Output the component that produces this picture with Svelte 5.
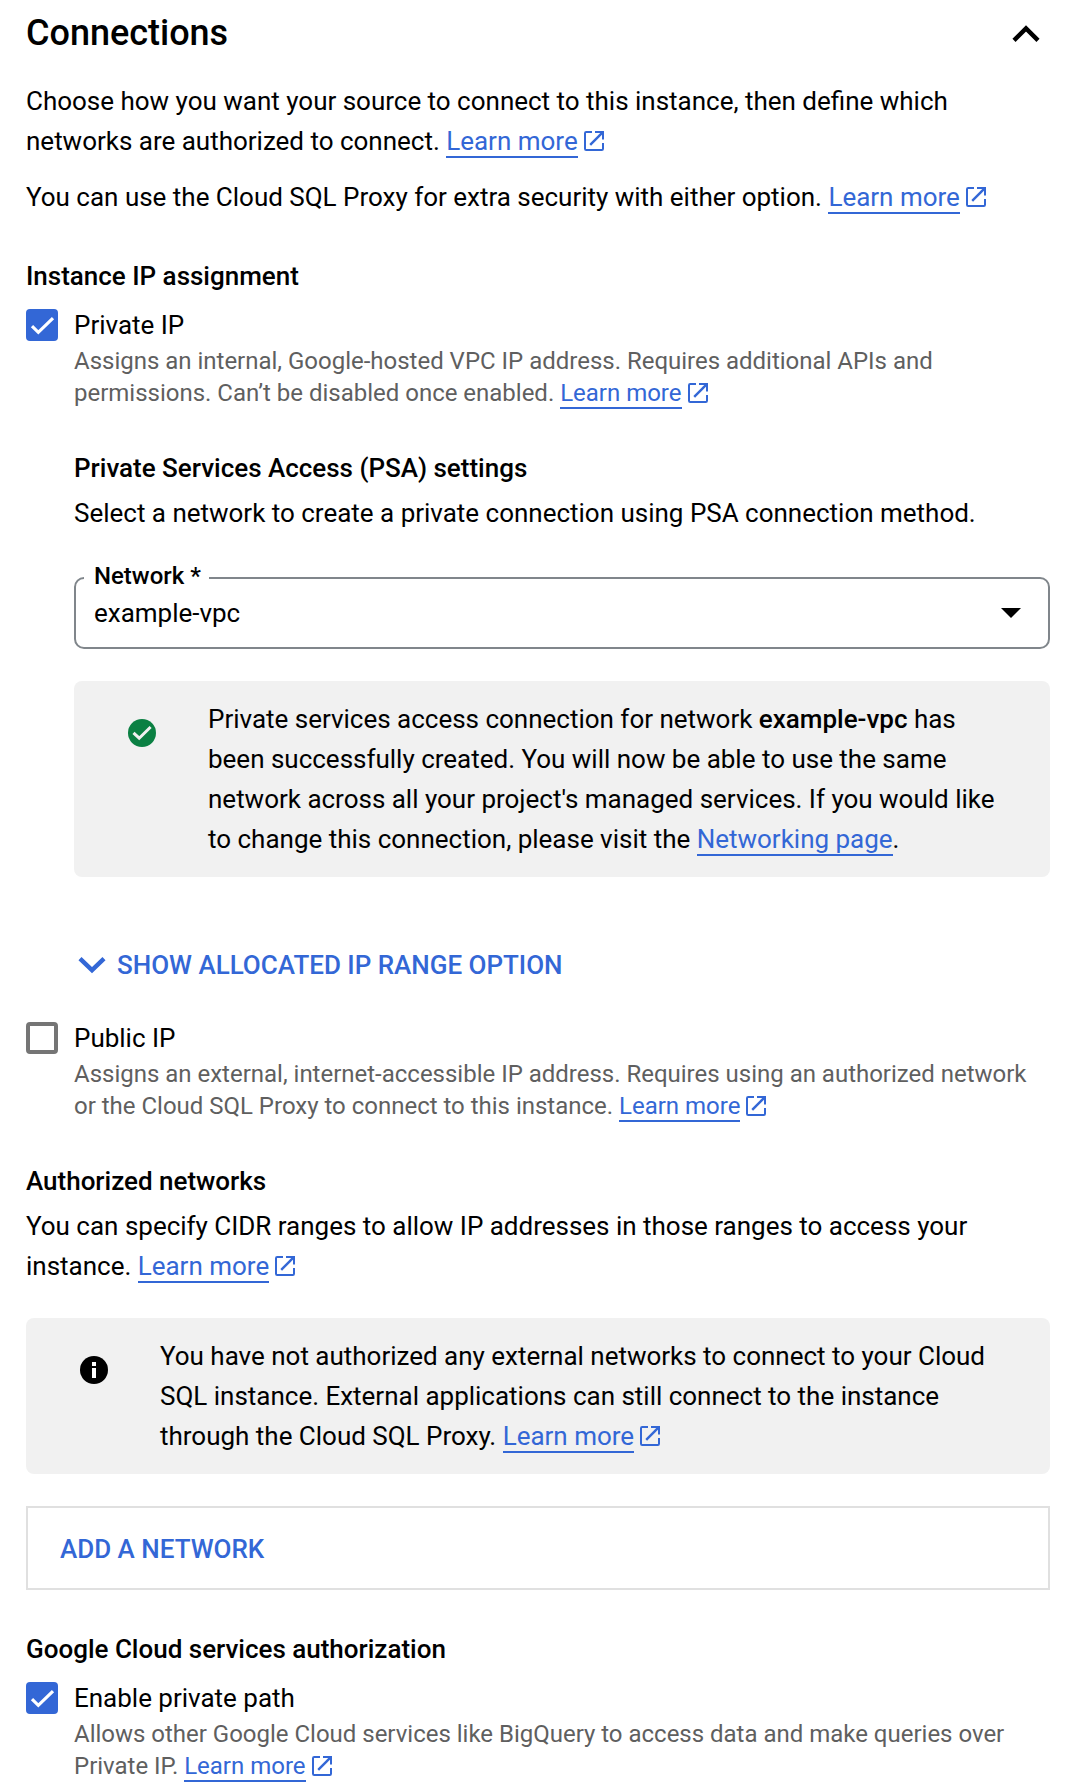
<script>
  let privateIp = $state(true);
  let publicIp = $state(false);
  let privatePath = $state(true);
</script>

{#snippet learnMore()}
  <span class="nowrap"><a href="#learn">Learn more</a><svg class="ext" viewBox="0 0 20 20" aria-hidden="true"><path d="M8 1H2.2Q1 1 1 2.2V17.8Q1 19 2.2 19H17.8Q19 19 19 17.8V12M11 1H19V8.5" /><path class="shaft" d="M18.6 1.4L6.2 13.8" /></svg></span>
{/snippet}

{#snippet checkbox(on)}
  <span class="box" class:on>
    {#if on}
      <svg viewBox="0 0 32 32" aria-hidden="true"><path d="M6 17.2L12.3 23.3L27 9.2" /></svg>
    {/if}
  </span>
{/snippet}

<main>
  <header>
    <h1>Connections</h1>
    <svg class="chev up" viewBox="0 0 28 18" aria-hidden="true"><path d="M2 15.4L14 3.4L26 15.4" /></svg>
  </header>

  <p>Choose how you want your source to connect to this instance, then define which<br />networks are authorized to connect. {@render learnMore()}</p>
  <p class="second">You can use the Cloud SQL Proxy for extra security with either option. {@render learnMore()}</p>

  <h2 class="assign">Instance IP assignment</h2>
  <button class="option" onclick={() => (privateIp = !privateIp)}>{@render checkbox(privateIp)}Private IP</button>
  <p class="hint">Assigns an internal, Google-hosted VPC IP address. Requires additional APIs and<br />permissions. Can’t be disabled once enabled. {@render learnMore()}</p>

  <section class="psa">
    <h2>Private Services Access (PSA) settings</h2>
    <p class="after">Select a network to create a private connection using PSA connection method.</p>
    <div class="field">
      <span class="label">Network *</span>
      <span>example-vpc</span>
      <svg class="caret" viewBox="0 0 20 10" aria-hidden="true"><path d="M0 0H20L10 10Z" /></svg>
    </div>
    <div class="notice">
      <svg class="status" viewBox="0 0 28 28" aria-hidden="true"><circle cx="14" cy="14" r="14" fill="#0b8043" /><path class="tick" d="M5.5 13.8L11.2 19.2L22.6 8" /></svg>
      <p>Private services access connection for network <b>example-vpc</b> has<br />been successfully created. You will now be able to use the same<br />network across all your project's managed services. If you would like<br />to change this connection, please visit the <a href="#networking">Networking page</a>.</p>
    </div>
    <button class="toggle">
      <svg class="chev" viewBox="0 0 28 18" aria-hidden="true"><path d="M2 2.6L14 14.2L26 2.6" /></svg>
      SHOW ALLOCATED IP RANGE OPTION
    </button>
  </section>

  <button class="option" onclick={() => (publicIp = !publicIp)}>{@render checkbox(publicIp)}Public IP</button>
  <p class="hint">Assigns an external, internet-accessible IP address. Requires using an authorized network<br />or the Cloud SQL Proxy to connect to this instance. {@render learnMore()}</p>

  <h2 class="authorized">Authorized networks</h2>
  <p class="after">You can specify CIDR ranges to allow IP addresses in those ranges to access your<br />instance. {@render learnMore()}</p>
  <div class="notice">
    <svg class="status" viewBox="0 0 28 28" aria-hidden="true"><circle cx="14" cy="14" r="14" /><path d="M12 6h4v4h-4zM12 12h4v10h-4z" fill="#fff" /></svg>
    <p>You have not authorized any external networks to connect to your Cloud<br />SQL instance. External applications can still connect to the instance<br />through the Cloud SQL Proxy. {@render learnMore()}</p>
  </div>
  <button class="add">ADD A NETWORK</button>

  <h2 class="services">Google Cloud services authorization</h2>
  <button class="option" onclick={() => (privatePath = !privatePath)}>{@render checkbox(privatePath)}Enable private path</button>
  <p class="hint">Allows other Google Cloud services like BigQuery to access data and make queries over<br />Private IP. {@render learnMore()}</p>
</main>

<style>
  :global(body) { margin: 0; background: #fff; }
  main {
    box-sizing: border-box;
    width: 1080px;
    height: 1782px;
    overflow: hidden;
    padding: 8px 30px 0 26px;
    font: 400 26px/40px Roboto, sans-serif;
    letter-spacing: -0.01px;
    font-feature-settings: "liga" 1;
    color: #000;
    white-space: nowrap;
  }
  h1, h2, p { margin: 0; }
  h2 { font-size: 26px; line-height: 40px; font-weight: 500; }
  button {
    display: flex;
    padding: 0;
    border: 0;
    background: none;
    font: inherit;
    letter-spacing: inherit;
    color: inherit;
    text-align: left;
  }
  header {
    display: flex;
    justify-content: space-between;
    height: 73px;
    padding-right: 10px;
  }
  h1 { font-size: 36px; line-height: 50px; font-weight: 500; }
  .second { margin-top: 16px; }
  .assign { margin: 39px 0 9px; }
  a { color: #3367d6; text-decoration: none; border-bottom: 2px solid #3367d6; }
  b { font-weight: 500; }
  .ext {
    width: 20px;
    height: 20px;
    margin-left: 6px;
    vertical-align: -1px;
    fill: none;
    stroke: #3367d6;
    stroke-width: 2;
  }
  .shaft { stroke-width: 2.4; }
  .chev { width: 28px; height: 18px; fill: none; stroke: currentColor; stroke-width: 4.4; }
  .chev.up { margin-top: 17px; }
  .option { align-items: center; gap: 16px; height: 40px; }
  .box {
    box-sizing: border-box;
    width: 32px;
    height: 32px;
    border: 4px solid #757575;
    border-radius: 4px;
  }
  .box.on { border: 0; background: #3367d6; }
  .box svg { display: block; width: 32px; height: 32px; fill: none; stroke: #fff; stroke-width: 3.2; }
  .hint { padding-left: 48px; font-size: 24px; line-height: 32px; color: #5f5f5f; }
  .hint .ext { vertical-align: -2px; }
  .psa { padding-left: 48px; margin: 39px 0 33px; }
  .after { margin-top: 5px; }
  .field {
    position: relative;
    display: flex;
    align-items: center;
    justify-content: space-between;
    box-sizing: border-box;
    height: 72px;
    margin-top: 44px;
    padding: 0 27px 0 18px;
    border: 2px solid #80868b;
    border-radius: 10px;
  }
  .label {
    position: absolute;
    left: 8px;
    top: -19px;
    padding: 0 8px 0 10px;
    background: #fff;
    font-size: 24px;
    line-height: 32px;
    font-weight: 500;
  }
  .caret { width: 20px; height: 10px; }
  .notice {
    display: flex;
    gap: 52px;
    margin-top: 32px;
    padding: 18px 0 18px 54px;
    border-radius: 8px;
    background: #f1f1f1;
  }
  .status { width: 28px; height: 28px; margin-top: 20px; }
  .tick { fill: none; stroke: #f1f1f1; stroke-width: 3; }
  .toggle {
    align-items: center;
    gap: 11px;
    height: 40px;
    margin-top: 68px;
    padding-left: 4px;
    font-weight: 500;
    color: #3367d6;
  }
  .authorized { margin-top: 39px; }
  .add {
    align-items: center;
    box-sizing: border-box;
    width: 100%;
    height: 84px;
    margin-top: 32px;
    padding: 2px 32px 0;
    border: 2px solid #e0e0e0;
    font-weight: 500;
    color: #3367d6;
  }
  .services { margin: 39px 0 9px; }
</style>
